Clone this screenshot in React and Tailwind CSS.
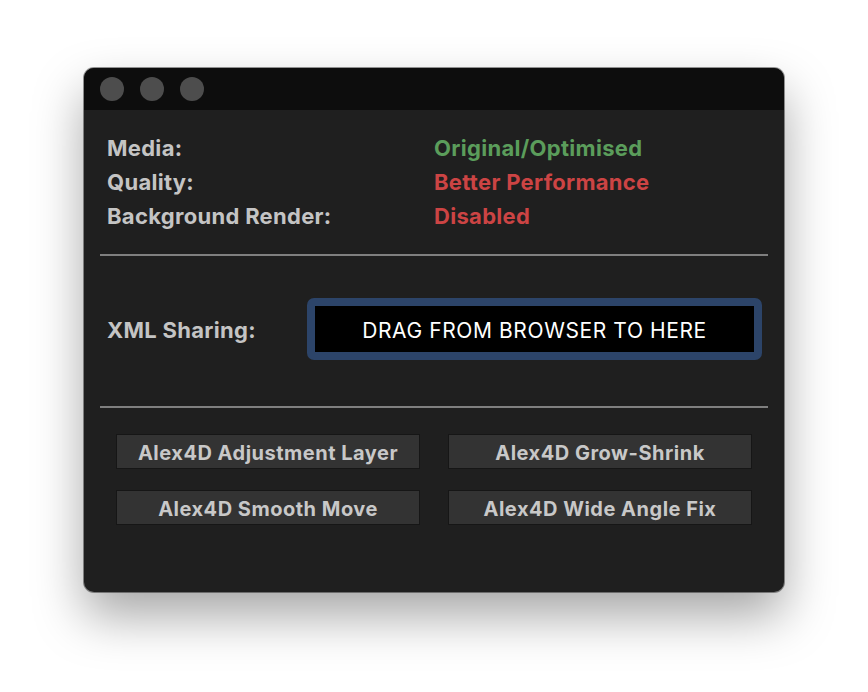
import React from 'react';

const infoRows = [
  { label: 'Media:', value: 'Original/Optimised', tone: 'text-[#5b9d5b]' },
  { label: 'Quality:', value: 'Better Performance', tone: 'text-[#cc4444]' },
  { label: 'Background Render:', value: 'Disabled', tone: 'text-[#cc4444]' },
];

const effects = [
  'Alex4D Adjustment Layer',
  'Alex4D Grow-Shrink',
  'Alex4D Smooth Move',
  'Alex4D Wide Angle Fix',
];

const App = () => {
  return (
    <div className="w-[868px] h-[692px] bg-white pt-[68px] pl-[84px] font-['Inter',sans-serif]">
      <div className="w-[700px] h-[524px] rounded-[10px] bg-[#1f1f1f] overflow-hidden shadow-[0_24px_50px_rgba(0,0,0,0.35)] ring-1 ring-black/40">
        {/* Title bar */}
        <div className="h-[42px] bg-[#0d0d0d] flex items-center gap-4 pl-4">
          <span className="w-6 h-6 rounded-full bg-[#4d4d4d]" />
          <span className="w-6 h-6 rounded-full bg-[#4d4d4d]" />
          <span className="w-6 h-6 rounded-full bg-[#4d4d4d]" />
        </div>

        <div className="px-4">
          {/* Status */}
          <div className="pt-[21px] pl-[7px] grid grid-cols-[327px_1fr] text-[22px] tracking-[0.3px] font-bold leading-[34px]">
            {infoRows.map((r) => (
              <React.Fragment key={r.label}>
                <span className="text-[#c4c4c4]">{r.label}</span>
                <span className={r.tone}>{r.value}</span>
              </React.Fragment>
            ))}
          </div>

          <div className="mt-[21px] h-[2px] bg-[#7f7f7f]" />

          {/* XML sharing */}
          <div className="mt-[42px] flex items-center">
            <span className="w-[207px] pl-[7px] pt-[3px] text-[22px] tracking-[0.3px] font-bold text-[#c4c4c4]">XML Sharing:</span>
            <div className="w-[455px] h-[62px] rounded-[7px] bg-[#2c4469] p-[8px]">
              <div className="h-full pt-[3px] bg-black flex items-center justify-center text-white text-[21px] tracking-[0.6px]">
                DRAG FROM BROWSER TO HERE
              </div>
            </div>
          </div>

          <div className="mt-[46px] h-[2px] bg-[#7f7f7f]" />

          {/* Effects */}
          <div className="mt-[26px] pl-4 grid grid-cols-[304px_304px] gap-x-[28px] gap-y-[21px]">
            {effects.map((e) => (
              <button
                key={e}
                className="h-[35px] pt-[2px] bg-[#333333] border border-[#161616] text-[#c8c8c8] text-[20px] tracking-[0.5px] font-bold"
              >
                {e}
              </button>
            ))}
          </div>
        </div>
      </div>
    </div>
  );
};

export default App;
